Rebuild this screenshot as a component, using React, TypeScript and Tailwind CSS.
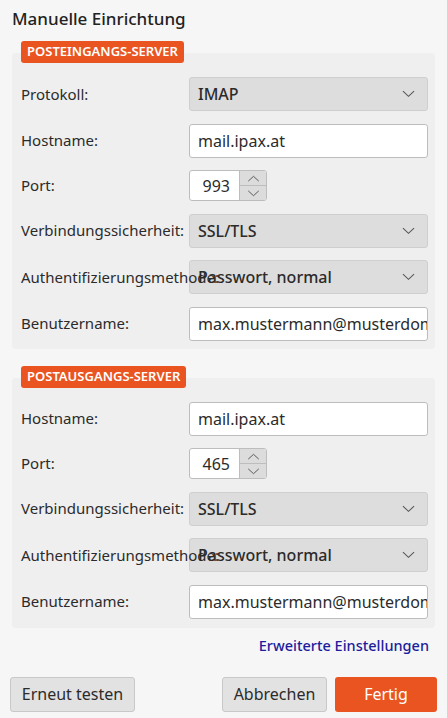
import React from 'react';

const FONT = { fontFamily: '"Noto Sans", "Open Sans", sans-serif' };

function Chevron({ up = false, className = '' }: { up?: boolean; className?: string }) {
  return (
    <svg viewBox="0 0 14 8" className={className} fill="none" stroke="#555" strokeWidth="1.1">
      {up ? <path d="M1 7 L7 1.5 L13 7" /> : <path d="M1 1 L7 6.5 L13 1" />}
    </svg>
  );
}

function Select({ value }: { value: string }) {
  return (
    <div className="h-[34px] flex items-center justify-between rounded-[3px] border border-[#cfcfcf] bg-[#dadada]/90 pl-2 pr-3 text-[16px] font-medium text-[#2b2b2b]">
      <span className="relative z-0">{value}</span>
      <Chevron className="w-[13px] h-[8px]" />
    </div>
  );
}

function Input({ value }: { value: string }) {
  return (
    <div className="h-[34px] flex items-center overflow-hidden whitespace-nowrap rounded-[3px] border border-[#bdbdbd] bg-white pl-2 text-[16px] text-[#2b2b2b]">
      {value}
    </div>
  );
}

function Spin({ value }: { value: string }) {
  return (
    <div className="h-[31px] w-[78px] flex rounded-[3px] border border-[#bdbdbd] bg-white overflow-hidden">
      <div className="flex-1 flex items-center justify-end pr-[9px] text-[16px] text-[#2b2b2b]">{value}</div>
      <div className="w-[27px] flex flex-col border-l border-[#bdbdbd] bg-[#dcdcdc]">
        <div className="flex-1 grid place-items-center border-b border-[#bdbdbd]">
          <Chevron up className="w-[13px] h-[7px]" />
        </div>
        <div className="flex-1 grid place-items-center">
          <Chevron className="w-[13px] h-[7px]" />
        </div>
      </div>
    </div>
  );
}

function Row({ label, children }: { label: string; children: React.ReactNode }) {
  return (
    <div className="grid grid-cols-[168px_239px] items-center">
      <div className="relative z-10 whitespace-nowrap text-[15px] text-[#2b2b2b]">{label}</div>
      <div>{children}</div>
    </div>
  );
}

function Badge({ text }: { text: string }) {
  return (
    <div className="relative z-10 ml-[21px] flex w-fit h-[22px] items-center rounded-[3px] bg-[#e95420] px-[6px] text-[13px] font-semibold text-white">
      {text}
    </div>
  );
}

export default function App() {
  return (
    <div style={FONT} className="w-[447px] h-[718px] bg-[#f6f6f6] overflow-hidden">
      <div className="pl-[12px] pt-[8px] h-[30px] leading-[22px] text-[17px] font-medium text-[#222]">Manuelle Einrichtung</div>

      <div className="mt-[11px]">
        <Badge text="POSTEINGANGS-SERVER" />
        <div className="-mt-[10px] mx-[12px] rounded-[4px] bg-[#efefef] pl-[9px] pt-[24px] pb-[8px] flex flex-col gap-[12.5px]">
          <Row label="Protokoll:"><Select value="IMAP" /></Row>
          <Row label="Hostname:"><Input value="mail.ipax.at" /></Row>
          <Row label="Port:"><Spin value="993" /></Row>
          <Row label="Verbindungssicherheit:"><Select value="SSL/TLS" /></Row>
          <Row label="Authentifizierungsmethode:"><Select value="Passwort, normal" /></Row>
          <Row label="Benutzername:"><Input value="max.mustermann@musterdomain.at" /></Row>
        </div>
      </div>

      <div className="mt-[17px]">
        <Badge text="POSTAUSGANGS-SERVER" />
        <div className="-mt-[10px] mx-[12px] rounded-[4px] bg-[#efefef] pl-[9px] pt-[24px] pb-[9px] flex flex-col gap-[12.5px]">
          <Row label="Hostname:"><Input value="mail.ipax.at" /></Row>
          <Row label="Port:"><Spin value="465" /></Row>
          <Row label="Verbindungssicherheit:"><Select value="SSL/TLS" /></Row>
          <Row label="Authentifizierungsmethode:"><Select value="Passwort, normal" /></Row>
          <Row label="Benutzername:"><Input value="max.mustermann@musterdomain.at" /></Row>
        </div>
      </div>

      <div className="mt-[7px] h-[20px] leading-[20px] pr-[18px] text-right text-[14.5px] font-medium text-[#1c1c9c]">Erweiterte Einstellungen</div>

      <div className="mt-[22px] px-[10px] flex items-center">
        <button className="h-[35px] w-[125px] rounded-[3px] border border-[#c8c8c8] bg-[#e2e2e2] text-[16px] text-[#2b2b2b]">Erneut testen</button>
        <div className="flex-1" />
        <button className="h-[35px] w-[105px] rounded-[3px] border border-[#c8c8c8] bg-[#e2e2e2] text-[16px] text-[#2b2b2b]">Abbrechen</button>
        <button className="ml-[8px] h-[35px] w-[102px] rounded-[3px] bg-[#e95420] text-[16px] text-white">Fertig</button>
      </div>
    </div>
  );
}
